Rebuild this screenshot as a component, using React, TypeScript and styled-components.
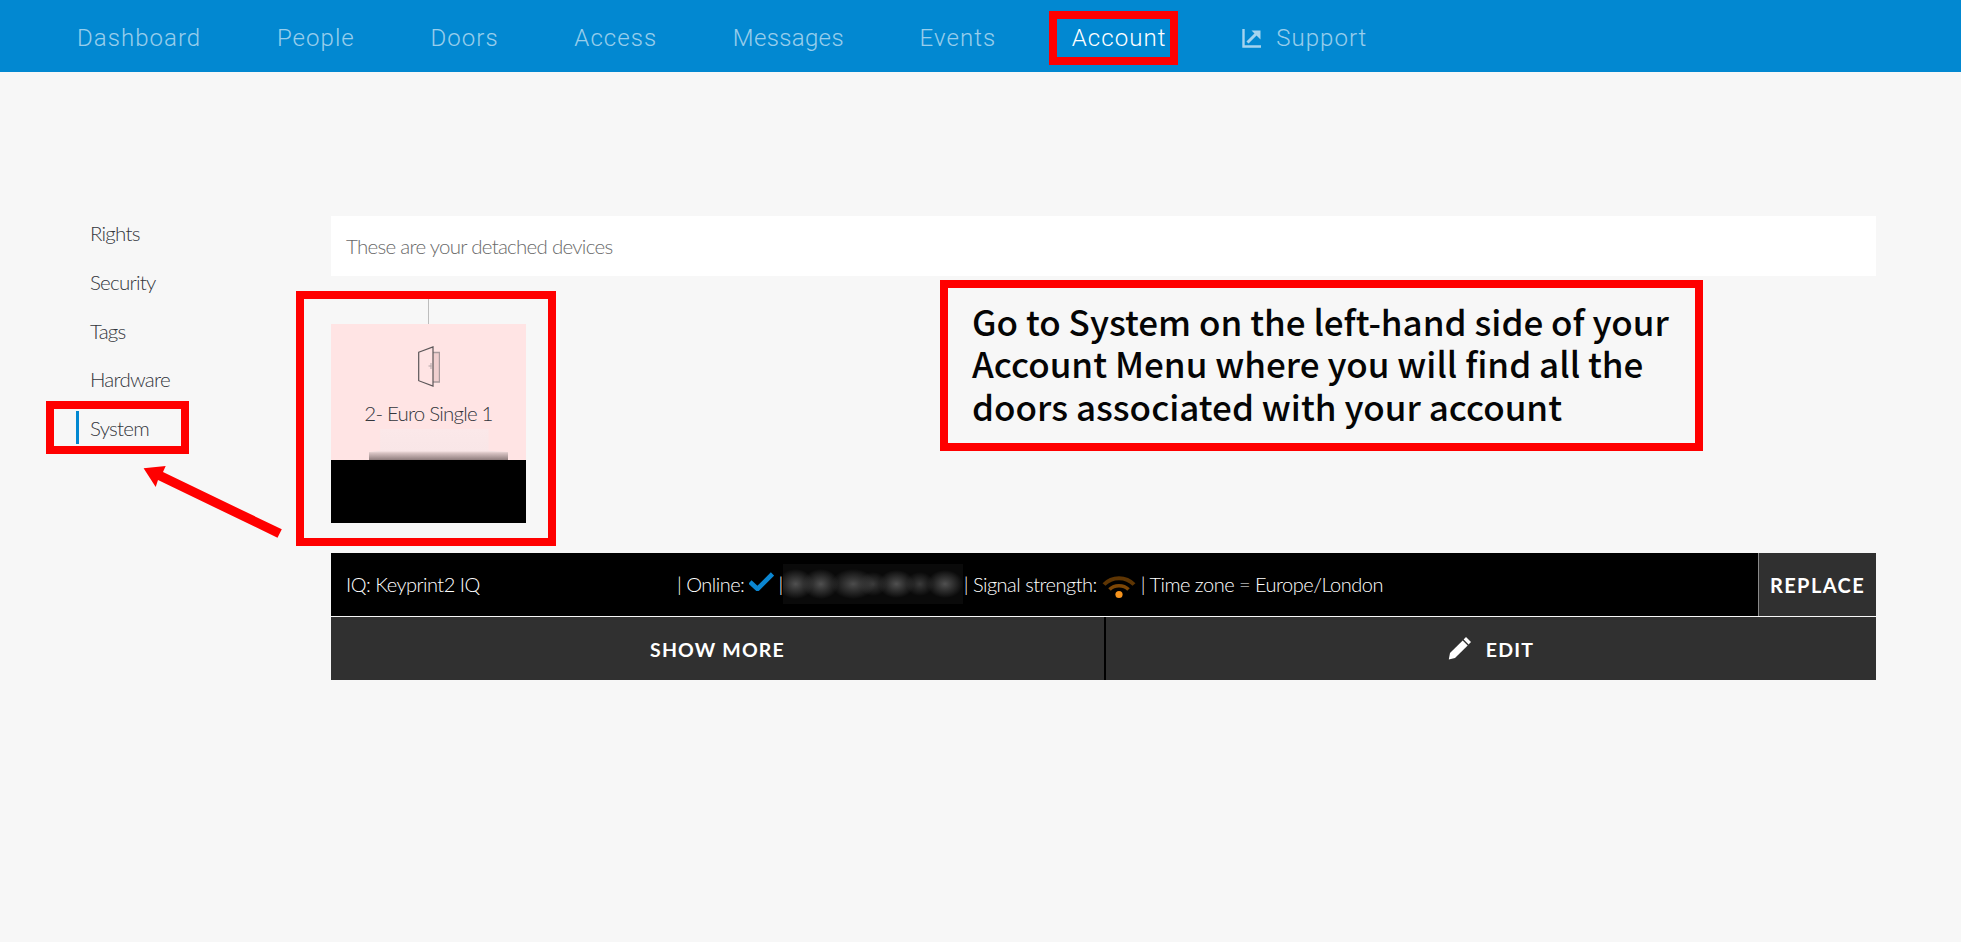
import React from "react";
import styled, { createGlobalStyle } from "styled-components";

const Global = createGlobalStyle`
  html, body { margin: 0; padding: 0; background: #f7f7f7; }
  * { box-sizing: border-box; }
  body { font-family: "Lato", "Liberation Sans", sans-serif; overflow: hidden; }
`;

const Page = styled.div`
  position: relative;
  min-height: 942px;
  background: #f7f7f7;
`;

const Header = styled.header`
  height: 72px;
  background: #0288d1;
  display: flex;
  align-items: center;
  padding-left: 77px;
  padding-top: 4px;
  gap: 75.7px;
`;

const NavItem = styled.a<{ $active?: boolean; $tight?: boolean }>`
  position: relative;
  display: flex;
  align-items: center;
  gap: 14px;
  font-family: "Roboto", sans-serif;
  font-weight: 300;
  font-size: 24px;
  line-height: 28px;
  letter-spacing: ${(p) => (p.$tight ? "0.35px" : "1.05px")};
  color: ${(p) => (p.$active ? "#ffffff" : "rgba(255,255,255,0.6)")};
`;

const Outline = styled.span`
  position: absolute;
  border: 8px solid #ff0000;
  pointer-events: none;
`;

const AccountOutline = styled(Outline)`
  left: -23px;
  right: -12px;
  top: -13px;
  bottom: -13px;
`;

const Body = styled.div`
  display: flex;
  padding-top: 144px;
  padding-right: 85px;
`;

const Sidebar = styled.nav`
  width: 331px;
  flex: none;
  display: flex;
  flex-direction: column;
  margin-top: -7px;
  padding-left: 90px;
`;

const SideItem = styled.a<{ $active?: boolean }>`
  position: relative;
  height: 48.7px;
  display: flex;
  align-items: center;
  font-size: 20.5px;
  font-weight: 300;
  letter-spacing: -0.75px;
  color: #33363c;

  ${(p) =>
    p.$active &&
    `&::before {
      content: "";
      position: absolute;
      left: -14px;
      top: 7px;
      bottom: 8px;
      width: 3px;
      background: #0288d1;
    }`}
`;

const SystemOutline = styled(Outline)`
  left: -44px;
  width: 143px;
  top: -3px;
  height: 53px;
`;

const Main = styled.main`
  position: relative;
  flex: 1;
  display: flex;
  flex-direction: column;
`;

const Notice = styled.div`
  height: 60px;
  background: #ffffff;
  display: flex;
  align-items: center;
  padding-left: 15px;
  font-size: 20.5px;
  font-weight: 300;
  letter-spacing: -0.73px;
  color: #6a6a6a;
`;

const Device = styled.div`
  position: relative;
  width: 195px;
  margin-top: 23px;
  display: flex;
  flex-direction: column;
  align-items: center;
`;

const Stem = styled.div`
  width: 1px;
  height: 25px;
  background: #bdbdbd;
`;

const DoorCard = styled.div`
  width: 100%;
  height: 136px;
  background: #ffe4e4;
  display: flex;
  flex-direction: column;
  align-items: center;
  padding-top: 22px;
`;

const DoorIcon = styled.svg`
  width: 22px;
  height: 41px;
  flex: none;
  margin-left: 1px;
`;

const DoorName = styled.div`
  margin-top: 13px;
  font-size: 20.5px;
  line-height: 26px;
  font-weight: 300;
  letter-spacing: -0.8px;
  color: #33363c;
`;

const Redaction = styled.div`
  margin-top: auto;
  margin-left: 20px;
  width: 139px;
  height: 31px;
  background: linear-gradient(
    to bottom,
    #fbe8e9 0,
    #f9e6e7 22px,
    #d9c4c4 24px,
    #8f7d7d 31px
  );
  clip-path: polygon(8% 0, 86% 0, 86% 70%, 100% 74%, 100% 100%, 0 100%, 0 74%, 8% 70%);
`;

const DoorFoot = styled.div`
  width: 100%;
  height: 63px;
  background: #000000;
`;

const DeviceOutline = styled(Outline)`
  left: -35px;
  width: 260px;
  top: -8px;
  height: 255px;
`;

const InfoRow = styled.div`
  margin-top: 30px;
  height: 63px;
  background: #000000;
  display: flex;
  align-items: stretch;
`;

const InfoText = styled.div`
  flex: 1;
  display: flex;
  align-items: center;
  padding-left: 15px;
  padding-bottom: 1px;
  font-size: 20px;
  font-weight: 300;
  letter-spacing: -0.5px;
  color: #ffffff;
  white-space: pre;
`;

const Model = styled.span`
  width: 331px;
  flex: none;
`;

const Check = styled.svg`
  width: 25px;
  height: 19px;
  margin: 0 4px 6px 5px;
  flex: none;
`;

const Serial = styled.span`
  width: 180px;
  height: 40px;
  margin: 0 1px 0 0;
  flex: none;
  background:
    radial-gradient(ellipse 18px 15px at 7% 50%, #505050, transparent),
    radial-gradient(ellipse 18px 15px at 21% 50%, #505050, transparent),
    radial-gradient(ellipse 22px 15px at 39% 50%, #4c4c4c, transparent),
    radial-gradient(ellipse 14px 12px at 50% 50%, #3a3a3a, transparent),
    radial-gradient(ellipse 18px 14px at 63% 50%, #505050, transparent),
    radial-gradient(ellipse 14px 12px at 76% 50%, #3a3a3a, transparent),
    radial-gradient(ellipse 18px 14px at 90% 50%, #505050, transparent),
    #0a0a0a;
`;

const Wifi = styled.svg`
  width: 34px;
  height: 25px;
  margin: 5px 5px 0 5px;
  flex: none;
`;

const ReplaceButton = styled.button`
  width: 118px;
  flex: none;
  border: 0;
  border-left: 1px solid #8a8a8a;
  background: #303030;
  color: #ffffff;
  font-family: "Lato", sans-serif;
  font-size: 20px;
  font-weight: 700;
  letter-spacing: 1.4px;
  padding: 0;
`;

const ActionRow = styled.div`
  margin-top: 1px;
  height: 63px;
  display: flex;
  background: #303030;
`;

const ActionButton = styled.button<{ $divider?: boolean }>`
  flex: ${(p) => (p.$divider ? "0 0 775px" : "1")};
  border: 0;
  background: #303030;
  color: #ffffff;
  display: flex;
  align-items: center;
  justify-content: center;
  gap: 14px;
  font-family: "Lato", sans-serif;
  font-size: 19.5px;
  font-weight: 700;
  letter-spacing: 1.2px;
  padding: 2px 0 0;
  ${(p) => p.$divider && "border-right: 2px solid #000000;"}
`;

const Pencil = styled.svg`
  width: 24px;
  height: 24px;
  flex: none;
  margin-bottom: 4px;
`;

const Callout = styled.div`
  position: absolute;
  left: 609px;
  top: 64px;
  width: 763px;
  height: 171px;
  border: 8px solid #ff0000;
  padding: 11.5px 0 0 24px;
  font-family: "Noto Sans CJK SC", "Noto Sans", sans-serif;
  font-weight: 500;
  font-size: 35px;
  line-height: 42.5px;
  color: #050505;
  background: #f7f7f7;
`;

const PointerArrow = styled.svg`
  position: absolute;
  left: 0;
  top: 0;
  width: 320px;
  height: 560px;
  pointer-events: none;
`;

const SupportIcon = styled.svg`
  width: 20px;
  height: 20px;
  flex: none;
`;

const nav = ["Dashboard", "People", "Doors", "Access", "Messages", "Events"];
const side = ["Rights", "Security", "Tags", "Hardware"];

export default function App() {
  return (
    <Page>
      <Global />
      <Header>
        {nav.map((n) => (
          <NavItem key={n} $tight={n === "Messages"}>
            {n}
          </NavItem>
        ))}
        <NavItem $active>
          Account
          <AccountOutline />
        </NavItem>
        <NavItem>
          <SupportIcon viewBox="0 0 20 20" fill="none">
            <path d="M1.5 1v17.5H19" stroke="#a5d3ee" strokeWidth="2.4" />
            <path d="M5.5 14.5 16 4" stroke="#a5d3ee" strokeWidth="3" />
            <path d="M9.5 2.5h9v9z" fill="#a5d3ee" />
          </SupportIcon>
          Support
        </NavItem>
      </Header>
      <Body>
        <Sidebar>
          {side.map((s) => (
            <SideItem key={s}>{s}</SideItem>
          ))}
          <SideItem $active>
            System
            <SystemOutline />
          </SideItem>
        </Sidebar>
        <Main>
          <Notice>These are your detached devices</Notice>
          <Device>
            <Stem />
            <DoorCard>
              <DoorIcon viewBox="0 0 22 41" fill="none">
                <path d="M15 6.5h6.5v29.5H15" fill="#f0cfcf" stroke="#a89a9c" strokeWidth="1.4" />
                <path d="M.7 6.2 15 .9v39.2L.7 34.7z" stroke="#5b5658" strokeWidth="1.2" />
                <path d="M13 17v6M10.5 20h3" stroke="#b3a5a7" strokeWidth="1" />
              </DoorIcon>
              <DoorName>2- Euro Single 1</DoorName>
              <Redaction />
            </DoorCard>
            <DoorFoot />
            <DeviceOutline />
          </Device>
          <InfoRow>
            <InfoText>
              <Model>IQ: Keyprint2 IQ</Model>
              <span>| Online:</span>
              <Check viewBox="0 0 25 19">
                <path d="M1 10 8.5 17 23.5 2" fill="none" stroke="#0b86d1" strokeWidth="4.6" />
              </Check>
              <span>|</span>
              <Serial />
              <span>| Signal strength:</span>
              <Wifi viewBox="0 0 34 25" fill="none">
                <path d="M2 10.5C10 2 24 2 32 10.5" stroke="#5e3503" strokeWidth="4" />
                <path d="M7.5 15.5C12.5 10.5 21.5 10.5 26.5 15.5" stroke="#7d4605" strokeWidth="3.6" />
                <circle cx="17" cy="20.5" r="3.6" fill="#f7941d" />
              </Wifi>
              <span>| Time zone = Europe/London</span>
            </InfoText>
            <ReplaceButton>REPLACE</ReplaceButton>
          </InfoRow>
          <ActionRow>
            <ActionButton $divider>SHOW MORE</ActionButton>
            <ActionButton>
              <Pencil viewBox="0 0 24 24">
                <path d="M18 1 23 6 20.6 8.6 15.6 3.5z" fill="#ffffff" />
                <path d="M14.7 4.4 19.7 9.5 7 22 .8 23.6 2 17z" fill="#ffffff" />
              </Pencil>
              EDIT
            </ActionButton>
          </ActionRow>
          <Callout>
            Go to System on the left-hand side of your
            <br />
            Account Menu where you will find all the
            <br />
            doors associated with your account
          </Callout>
        </Main>
      </Body>
      <PointerArrow viewBox="0 0 320 560">
        <polygon
          points="143.6,468.3 165.7,466 163,472 281.8,529.3 277.5,537.7 158,480 155.7,487"
          fill="#ff0000"
        />
      </PointerArrow>
    </Page>
  );
}
